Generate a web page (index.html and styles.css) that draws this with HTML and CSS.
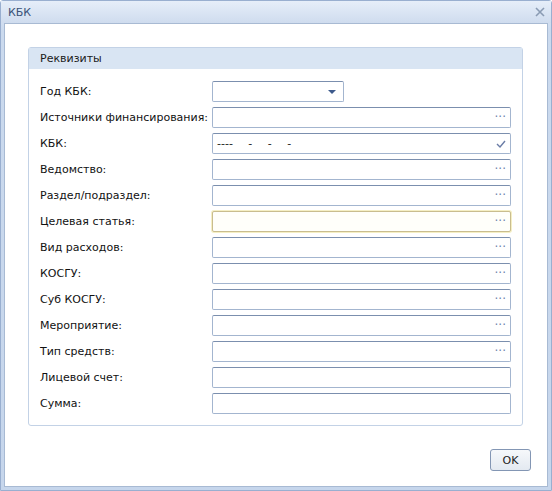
FILE: index.html
```html
<!DOCTYPE html>
<html>
<head>
<meta charset="utf-8">
<link rel="stylesheet" href="styles.css">
</head>
<body>
<div class="window">
  <div class="titlebar">
    <span class="title">КБК</span>
    <svg class="close" width="12" height="12" viewBox="0 0 12 12"><path d="M2 2L10 10M10 2L2 10" stroke="#8a9bb3" stroke-width="1.6" fill="none"/></svg>
  </div>
  <div class="body">
    <div class="fieldset">
      <div class="legend">Реквизиты</div>
      <div class="rows">
        <div class="row"><label>Год КБК:</label><div class="field combo"><span class="arrow"></span></div></div>
        <div class="row"><label>Источники финансирования:</label><div class="field"><span class="dots">···</span></div></div>
        <div class="row"><label>КБК:</label><div class="field"><span class="mask">---- - - -</span><svg class="check" width="10" height="8" viewBox="0 0 10 8"><path d="M1 4L4 7L9 1" stroke="#6a7ca6" stroke-width="1.4" fill="none"/></svg></div></div>
        <div class="row"><label>Ведомство:</label><div class="field"><span class="dots">···</span></div></div>
        <div class="row"><label>Раздел/подраздел:</label><div class="field"><span class="dots">···</span></div></div>
        <div class="row"><label>Целевая статья:</label><div class="field focus"><span class="dots">···</span></div></div>
        <div class="row"><label>Вид расходов:</label><div class="field"><span class="dots">···</span></div></div>
        <div class="row"><label>КОСГУ:</label><div class="field"><span class="dots">···</span></div></div>
        <div class="row"><label>Суб КОСГУ:</label><div class="field"><span class="dots">···</span></div></div>
        <div class="row"><label>Мероприятие:</label><div class="field"><span class="dots">···</span></div></div>
        <div class="row"><label>Тип средств:</label><div class="field"><span class="dots">···</span></div></div>
        <div class="row"><label>Лицевой счет:</label><div class="field"></div></div>
        <div class="row"><label>Сумма:</label><div class="field"></div></div>
      </div>
    </div>
    <div class="buttons"><button class="btn">OK</button></div>
  </div>
</div>
</body>
</html>
```
FILE: styles.css
```css
html, body {
  margin: 0;
  padding: 0;
  width: 552px;
  height: 491px;
  overflow: hidden;
  font-family: "DejaVu Sans", Verdana, sans-serif;
  font-size: 11px;
  color: #000;
}
.window {
  box-sizing: border-box;
  width: 552px;
  height: 491px;
  display: flex;
  flex-direction: column;
  background: linear-gradient(#dfe8f6, #cbdaee 30px, #c6d6ec);
  border: 1px solid #99afd0;
  border-radius: 3px 3px 0 0;
}
.titlebar {
  height: 22px;
  display: flex;
  align-items: center;
  justify-content: space-between;
  padding: 0 5px 0 7px;
  background: linear-gradient(#e6eef9, #cfdcee);
}
.title {
  color: #3a5278;
  font-size: 11px;
}
.close { display: block; }
.body {
  flex: 1;
  margin: 0 3px 3px 3px;
  background: #fff;
  border: 1px solid #a8bad3;
  padding: 23px 0 0 23px;
  display: flex;
  flex-direction: column;
}
.fieldset {
  width: 495px;
  box-sizing: border-box;
  border: 1px solid #c3d2e6;
  border-radius: 3px;
}
.legend {
  height: 21px;
  line-height: 21px;
  padding-left: 11px;
  background: #d9e5f3;
  color: #1a1a1a;
}
.rows {
  display: flex;
  flex-direction: column;
  gap: 5px;
  padding: 12px 0 11px 11px;
}
.row {
  display: flex;
  align-items: center;
  height: 21px;
}
.row label {
  width: 172px;
  flex: none;
  color: #111;
}
.field {
  box-sizing: border-box;
  width: 299px;
  height: 21px;
  border: 1px solid #a3b5cf;
  border-top-color: #7b8fae;
  border-radius: 2px;
  background: #fff;
  position: relative;
  display: flex;
  align-items: center;
  justify-content: flex-end;
  padding-right: 4px;
}
.field.combo {
  width: 132px;
  padding-right: 7px;
}
.field.focus {
  border-color: #c9bd8e;
  box-shadow: 0 0 0 1px #f5efc4;
  background: #fffffa;
}
.arrow {
  width: 0;
  height: 0;
  border-left: 4px solid transparent;
  border-right: 4px solid transparent;
  border-top: 4px solid #3d5a8c;
}
.dots {
  color: #6f86ad;
  font-size: 12px;
  line-height: 1;
  position: relative;
  top: -1px;
}
.mask {
  position: absolute;
  left: 4px;
  top: 3px;
  color: #222;
  white-space: pre;
  word-spacing: 12px;
}
.check { display: block; }
.buttons {
  display: flex;
  justify-content: flex-end;
  padding: 23px 16px 0 0;
}
.btn {
  width: 41px;
  height: 22px;
  font-family: "DejaVu Sans", Verdana, sans-serif;
  font-size: 11px;
  color: #222;
  border: 1px solid #8396b4;
  border-radius: 3px;
  background: linear-gradient(#f6f8fb, #e3e9f1);
  padding: 0;
}
```
